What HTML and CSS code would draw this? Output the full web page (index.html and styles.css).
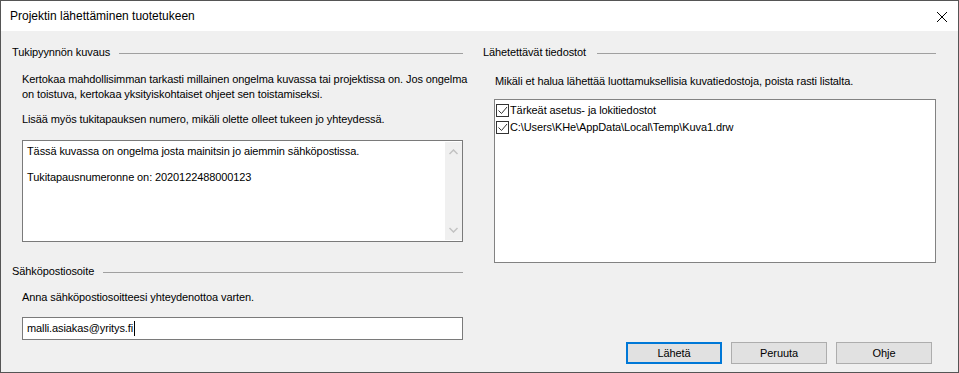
FILE: index.html
```html
<!DOCTYPE html>
<html lang="fi">
<head>
    <meta charset="UTF-8">
    <title>Projektin lähettäminen tuotetukeen</title>
    <link rel="stylesheet" href="styles.css">
</head>
<body>
    <div class="dialog">
        <div class="titlebar">
            <span class="title">Projektin lähettäminen tuotetukeen</span>
            <svg class="close" width="12" height="12" viewBox="0 0 12 12">
                <path d="M1 1 L11 11 M11 1 L1 11" stroke="#000" stroke-width="1" fill="none"/>
            </svg>
        </div>

        <div class="content">
            <div class="column left">
                <div class="group-header">
                    <span>Tukipyynnön kuvaus</span>
                    <div class="rule"></div>
                </div>
                <p class="hint first">Kertokaa mahdollisimman tarkasti millainen ongelma kuvassa tai projektissa on. Jos ongelma<br>on toistuva, kertokaa yksityiskohtaiset ohjeet sen toistamiseksi.</p>
                <p class="hint second">Lisää myös tukitapauksen numero, mikäli olette olleet tukeen jo yhteydessä.</p>

                <div class="memo">
                    <div class="memo-text">
                        <div>Tässä kuvassa on ongelma josta mainitsin jo aiemmin sähköpostissa.</div>
                        <div class="blank"></div>
                        <div>Tukitapausnumeronne on: 2020122488000123</div>
                    </div>
                    <div class="scrollbar">
                        <svg width="9" height="6" viewBox="0 0 9 6">
                            <path d="M0.5 5 L4.5 1 L8.5 5" stroke="#c2c2c2" stroke-width="1.5" fill="none"/>
                        </svg>
                        <svg width="9" height="6" viewBox="0 0 9 6">
                            <path d="M0.5 1 L4.5 5 L8.5 1" stroke="#c2c2c2" stroke-width="1.5" fill="none"/>
                        </svg>
                    </div>
                </div>

                <div class="group-header email-header">
                    <span>Sähköpostiosoite</span>
                    <div class="rule"></div>
                </div>
                <p class="hint email-hint">Anna sähköpostiosoitteesi yhteydenottoa varten.</p>
                <div class="textbox">malli.asiakas@yritys.fi<span class="caret"></span></div>
            </div>

            <div class="column right">
                <div class="group-header">
                    <span>Lähetettävät tiedostot</span>
                    <div class="rule"></div>
                </div>
                <p class="hint files-hint">Mikäli et halua lähettää luottamuksellisia kuvatiedostoja, poista rasti listalta.</p>

                <div class="listbox">
                    <div class="list-item">
                        <span class="checkbox">
                            <svg width="11" height="11" viewBox="0 0 11 11">
                                <path d="M1.5 5.5 L4.5 8.5 L10 2" stroke="#333" stroke-width="1" fill="none"/>
                            </svg>
                        </span>
                        <span>Tärkeät asetus- ja lokitiedostot</span>
                    </div>
                    <div class="list-item">
                        <span class="checkbox">
                            <svg width="11" height="11" viewBox="0 0 11 11">
                                <path d="M1.5 5.5 L4.5 8.5 L10 2" stroke="#333" stroke-width="1" fill="none"/>
                            </svg>
                        </span>
                        <span>C:\Users\KHe\AppData\Local\Temp\Kuva1.drw</span>
                    </div>
                </div>

                <div class="button-row">
                    <button class="btn btn-default">Lähetä</button>
                    <button class="btn">Peruuta</button>
                    <button class="btn">Ohje</button>
                </div>
            </div>
        </div>
    </div>
</body>
</html>
```

FILE: styles.css
```css
html, body {
    margin: 0;
    padding: 0;
}

body {
    font-family: "Liberation Sans", Arial, sans-serif;
    font-size: 11px;
    letter-spacing: -0.1px;
    line-height: 15px;
    color: #000;
    background: #f0f0f0;
}

.dialog {
    width: 959px;
    height: 373px;
    box-sizing: border-box;
    border: 1px solid #555;
    display: flex;
    flex-direction: column;
    overflow: hidden;
}

.titlebar {
    height: 30px;
    background: #fff;
    display: flex;
    align-items: center;
    justify-content: space-between;
    padding: 0 9px 0 9px;
    flex-shrink: 0;
}

.title {
    font-size: 12px;
    letter-spacing: 0;
    margin-top: 1px;
}

.close {
    margin-right: 1px;
    margin-top: 1px;
}

.content {
    flex: 1;
    display: grid;
    grid-template-columns: 451px 453px;
    column-gap: 20px;
    padding: 14px 0 0 11px;
}

.column {
    display: flex;
    flex-direction: column;
}

.group-header {
    display: flex;
    align-items: center;
    height: 15px;
}

.group-header .rule {
    flex: 1;
    height: 1px;
    background: #a0a0a0;
    margin-left: 9px;
    margin-top: 1px;
}

.hint {
    margin: 0;
}

.left .hint {
    padding-left: 10px;
}

.hint.first {
    margin-top: 12px;
    white-space: nowrap;
}

.hint.second {
    margin-top: 10px;
}

.memo {
    margin: 13px 0 0 10px;
    height: 102px;
    box-sizing: border-box;
    border: 1px solid #7a7a7a;
    background: #fff;
    display: flex;
}

.memo-text {
    flex: 1;
    padding: 3px 4px;
}

.memo-text .blank {
    height: 11px;
}

.scrollbar {
    width: 17px;
    background: #f0f0f0;
    display: flex;
    flex-direction: column;
    align-items: center;
    justify-content: space-between;
    padding: 7px 0 7px;
    margin: 1px 0;
}

.email-header {
    margin-top: 22px;
}

.hint.email-hint {
    margin-top: 11px;
}

.textbox {
    margin: 12px 0 0 10px;
    height: 23px;
    box-sizing: border-box;
    border: 1px solid #7a7a7a;
    background: #fff;
    padding: 3px 4px;
    line-height: 15px;
    display: flex;
    align-items: center;
}

.caret {
    display: inline-block;
    width: 1px;
    height: 15px;
    background: #000;
    margin-left: 1px;
}

.right .group-header .rule {
    margin-left: 11px;
}

.hint.files-hint {
    padding-left: 12px;
    margin-top: 14px;
}

.listbox {
    margin: 10px 0 0 11px;
    height: 164px;
    box-sizing: border-box;
    border: 1px solid #828282;
    background: #fff;
    padding: 2px 1px;
}

.list-item {
    display: flex;
    align-items: center;
    height: 17px;
}

.checkbox {
    width: 13px;
    height: 13px;
    box-sizing: border-box;
    border: 1px solid #333;
    background: #fff;
    display: flex;
    align-items: center;
    justify-content: center;
    margin-right: 1px;
}

.button-row {
    display: flex;
    justify-content: flex-end;
    gap: 9px;
    margin-top: 79px;
    margin-right: 4px;
}

.btn {
    width: 96px;
    height: 22px;
    box-sizing: border-box;
    border: 1px solid #adadad;
    background: #e1e1e1;
    font-family: inherit;
    font-size: 11px;
    letter-spacing: -0.1px;
    color: #000;
    padding: 0;
}

.btn-default {
    border: 2px solid #0078d7;
}
```
